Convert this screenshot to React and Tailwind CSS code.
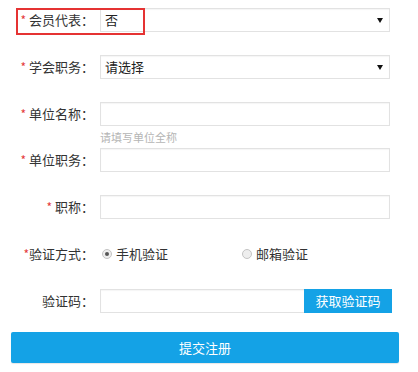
const font = { fontFamily: '"Noto Sans CJK SC", "Noto Sans", sans-serif' };

const Label = ({ text, required = true, tight = false }) => (
  <div className="w-[94px] shrink-0 text-right text-[13px] text-[#333] leading-[24px] whitespace-nowrap">
    {required && <span className="text-[#e4393c] text-[12px] mr-[3px]">*</span>}
    {text}
  </div>
);

const Row = ({ children, className = "" }) => (
  <div className={`flex items-center gap-[6px] h-[24px] ${className}`}>{children}</div>
);

const Select = ({ value }) => (
  <div className="relative w-[290px] h-[24px] border border-[#e2e2e2] shadow-[inset_0_1px_1px_rgba(0,0,0,0.04)] text-[13px] text-[#222] leading-[22px] pl-[4px]">
    {value}
    <span className="absolute right-[6px] top-[9px] w-0 h-0 border-l-[3px] border-r-[3px] border-t-[5px] border-l-transparent border-r-transparent border-t-[#111]" />
  </div>
);

const Input = ({ className = "w-[290px]" }) => (
  <div className={`h-[24px] border border-[#e2e2e2] shadow-[inset_0_1px_1px_rgba(0,0,0,0.04)] bg-white ${className}`} />
);

const Radio = ({ checked, text }) => (
  <label className="flex items-center gap-[4px] text-[13px] text-[#333]">
    <span className="w-[10px] h-[10px] rounded-full border border-[#c4c4c4] bg-[#eeeeee] flex items-center justify-center">
      {checked && <span className="w-[4px] h-[4px] rounded-full bg-[#555]" />}
    </span>
    {text}
  </label>
);

export default function App() {
  return (
    <div className="relative w-[418px] h-[372px] bg-white pt-[8px]" style={font}>
      <Row>
        <Label text="会员代表：" />
        <Select value="否" />
      </Row>
      <Row className="mt-[23px]">
        <Label text="学会职务：" />
        <Select value="请选择" />
      </Row>
      <Row className="mt-[23px]">
        <Label text="单位名称：" />
        <Input />
      </Row>
      <div className="h-[22px] pl-[100px] text-[11px] leading-[22px] text-[#b5b5b5]">请填写单位全称</div>
      <Row>
        <Label text="单位职务：" />
        <Input />
      </Row>
      <Row className="mt-[23px]">
        <Label text="职称：" />
        <Input />
      </Row>
      <Row className="mt-[23px]">
        <div className="w-[94px] shrink-0 text-right text-[13px] text-[#333] leading-[24px] whitespace-nowrap">
          <span className="text-[#e4393c] text-[12px]">*</span>验证方式：
        </div>
        <div className="flex items-center pl-[2px]">
          <div className="w-[140px]">
            <Radio checked text="手机验证" />
          </div>
          <Radio text="邮箱验证" />
        </div>
      </Row>
      <Row className="mt-[23px]">
        <Label text="验证码：" required={false} />
        <div className="flex">
          <Input className="w-[204px] border-r-0" />
          <button className="w-[88px] h-[24px] bg-[#14a2e6] text-white text-[13px] leading-[24px]">获取验证码</button>
        </div>
      </Row>
      <div className="px-[11px] mt-[19px]">
        <button className="w-[388px] h-[31px] bg-[#14a2e6] text-white text-[13px] rounded-[2px] shadow-[0_1px_1px_rgba(0,0,0,0.1)]">提交注册</button>
      </div>
      <div className="absolute left-[16px] top-[8px] w-[129px] h-[27px] border-2 border-[#e53333]" />
    </div>
  );
}
